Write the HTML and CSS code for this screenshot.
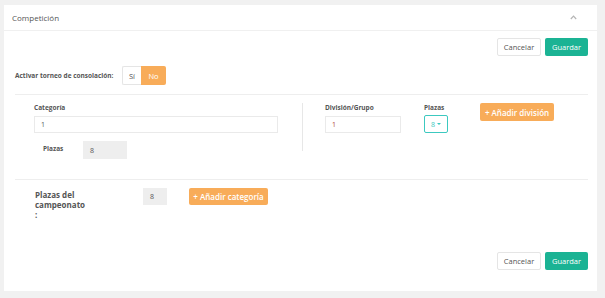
FILE: index.html
```html
<!DOCTYPE html>
<html lang="es">

<head>
  <meta charset="UTF-8">
  <meta name="viewport" content="width=device-width, initial-scale=1.0">
  <title>Competición</title>
  <link rel="stylesheet" href="styles.css">
</head>

<body>
  <div class="panel">
    <div class="panel-head">
      <span class="panel-title">Competición</span>
      <svg class="chevron" width="7" height="5" viewBox="0 0 7 5"><path d="M0.8 4 L3.5 1.2 L6.2 4" fill="none" stroke="#b5b5b5" stroke-width="1.2"/></svg>
    </div>
    <div class="panel-body">
      <div class="actions">
        <button class="btn btn-white">Cancelar</button>
        <button class="btn btn-green">Guardar</button>
      </div>
      <div class="consol">
        <span class="consol-label">Activar torneo de consolación:</span>
        <div class="toggle">
          <span class="toggle-si">Sí</span>
          <span class="toggle-no">No</span>
        </div>
      </div>
      <hr class="sep">
      <div class="cat-row">
        <div class="cat-col">
          <label class="lbl">Categoría</label>
          <div class="field field-wide">1</div>
          <div class="plazas-line">
            <span class="lbl">Plazas</span>
            <div class="field field-gray">8</div>
          </div>
        </div>
        <div class="divider"></div>
        <div class="div-col">
          <label class="lbl">División/Grupo</label>
          <div class="field field-div">1</div>
        </div>
        <div class="sel-col">
          <label class="lbl">Plazas</label>
          <div class="select">8 <span class="caret"></span></div>
        </div>
        <button class="btn btn-orange btn-div">+ Añadir división</button>
      </div>
      <hr class="sep sep-2">
      <div class="total-row">
        <div class="total-label">Plazas del campeonato :</div>
        <div class="field field-gray field-small">8</div>
        <button class="btn btn-orange btn-cat">+ Añadir categoría</button>
      </div>
      <div class="actions actions-bottom">
        <button class="btn btn-white">Cancelar</button>
        <button class="btn btn-green">Guardar</button>
      </div>
    </div>
  </div>
</body>

</html>
```

FILE: styles.css
```css
body {
  margin: 0;
  padding: 5px 8px 6px 4px;
  background: #f1f1f1;
  font-family: "Open Sans", "Noto Sans", sans-serif;
  color: #555;
}

.panel {
  height: 286px;
  background: #fff;
}

.panel-head {
  display: flex;
  align-items: center;
  justify-content: space-between;
  height: 25px;
  padding: 0 20px 0 8px;
  border-bottom: 1px solid #f0f0f0;
}

.panel-title {
  font-size: 8px;
  color: #555;
}

.panel-body {
  padding: 7px 9px 0 11px;
}

.actions {
  display: flex;
  justify-content: flex-end;
  gap: 4px;
}

.actions-bottom {
  margin-top: 32px;
}

.btn {
  height: 18px;
  border: 1px solid transparent;
  border-radius: 2px;
  font-family: "Open Sans", "Noto Sans", sans-serif;
  font-size: 7.5px;
  padding: 0;
}

.btn-white {
  width: 44px;
  background: #fff;
  border-color: #e5e5e5;
  color: #555;
}

.btn-green {
  width: 43px;
  background: #1bb394;
  color: #fff;
}

.btn-orange {
  background: #f8ac59;
  color: #fff;
  font-weight: 600;
}

.consol {
  display: flex;
  align-items: center;
  margin-top: 10px;
}

.consol-label {
  font-size: 6.5px;
  font-weight: 700;
  width: 107px;
}

.toggle {
  display: flex;
  height: 19px;
  font-size: 7.5px;
}

.toggle span {
  display: flex;
  align-items: center;
  justify-content: center;
}

.toggle-si {
  width: 18px;
  border: 1px solid #e5e5e5;
  border-right: none;
  border-radius: 2px 0 0 2px;
}

.toggle-no {
  width: 25px;
  background: #f8ac59;
  color: #fff;
  border-radius: 0 2px 2px 0;
}

.sep {
  margin: 9px 0 0;
  border: none;
  border-top: 1px solid #eeeeee;
}

.sep-2 {
  margin-top: 20px;
}

.cat-row {
  display: flex;
  align-items: flex-start;
  padding-top: 8px;
}

.lbl {
  display: block;
  font-size: 6.5px;
  font-weight: 700;
  color: #555;
  height: 13px;
  line-height: 9px;
}

.cat-col {
  width: 244px;
  margin-left: 19px;
}

.field {
  display: flex;
  align-items: center;
  box-sizing: border-box;
  height: 17px;
  padding: 0 6px;
  border: 1px solid #eaeaea;
  font-size: 7px;
  color: #555;
}

.field-wide {
  width: 244px;
}

.plazas-line {
  display: flex;
  align-items: flex-start;
  margin-top: 8px;
  padding-left: 9px;
}

.plazas-line .lbl {
  width: 40px;
  padding-top: 3px;
}

.field-gray {
  width: 44px;
  height: 18px;
  background: #eeeeee;
  border-color: #eeeeee;
}

.divider {
  width: 1px;
  height: 48px;
  background: #e7e7e7;
  margin-left: 24px;
}

.div-col {
  margin-left: 22px;
  width: 76px;
}

.field-div {
  width: 76px;
  color: #b0413e;
}

.sel-col {
  margin-left: 23px;
}

.select {
  display: flex;
  align-items: center;
  justify-content: center;
  gap: 2px;
  box-sizing: border-box;
  width: 24px;
  height: 18px;
  border: 1px solid #3cc9c0;
  border-radius: 2px;
  color: #3cc9c0;
  font-size: 7px;
  margin-top: -1px;
}

.caret {
  width: 0;
  height: 0;
  border-left: 2px solid transparent;
  border-right: 2px solid transparent;
  border-top: 2px solid #3cc9c0;
}

.btn-div {
  width: 74px;
  margin-left: 32px;
  font-size: 8px;
}

.total-row {
  display: flex;
  align-items: flex-start;
  padding-top: 8px;
  padding-left: 20px;
}

.total-label {
  width: 51px;
  font-size: 8px;
  font-weight: 700;
  line-height: 10px;
  padding-top: 2px;
  color: #555;
}

.field-small {
  width: 24px;
  margin-left: 57px;
  height: 17px;
}

.btn-cat {
  width: 79px;
  height: 17px;
  margin-left: 22px;
  font-size: 8px;
}
```
